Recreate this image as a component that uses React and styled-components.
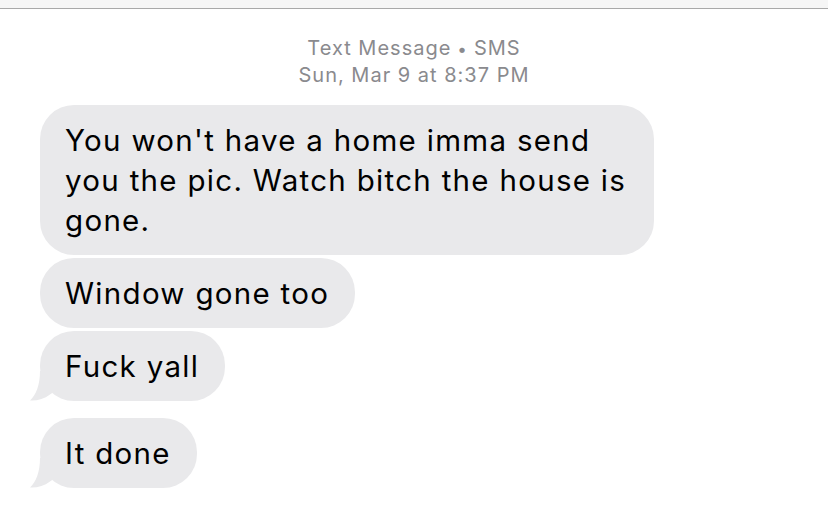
import React from "react";
import styled, { createGlobalStyle } from "styled-components";

const GlobalStyle = createGlobalStyle`
  html, body {
    margin: 0;
    padding: 0;
    background: #ffffff;
  }
  body {
    font-family: Inter, "Liberation Sans", Arial, sans-serif;
    -webkit-font-smoothing: antialiased;
  }
`;

const Page = styled.div`
  width: 828px;
  height: 517px;
  overflow: hidden;
  background: #fff;
`;

const TopBar = styled.div`
  height: 8px;
  background: #f6f6f6;
  border-bottom: 1px solid #a9a9a9;
`;

const Header = styled.div`
  display: flex;
  flex-direction: column;
  align-items: center;
  padding-top: 26px;
  color: #8a8a8e;
  font-size: 20px;
  line-height: 26px;
  letter-spacing: 1px;
`;

const Dot = styled.span`
  margin: 0 6px;
  font-size: 17px;
`;

const Thread = styled.div`
  display: flex;
  flex-direction: column;
  align-items: flex-start;
  padding: 17px 0 0 40px;
`;

const Bubble = styled.div`
  position: relative;
  max-width: 614px;
  box-sizing: border-box;
  padding: 15px 26px 15px 25px;
  background: #e9e9eb;
  color: #000;
  border-radius: 34px;
  font-size: 29.5px;
  line-height: 40px;
  letter-spacing: 1.3px;
  margin-top: ${(p) => (p.$gap === undefined ? 3 : p.$gap)}px;
`;

const Tail = styled.svg`
  position: absolute;
  left: -10px;
  bottom: 0;
  width: 26px;
  height: 30px;
`;

function Message({ children, tail, gap }) {
  return (
    <Bubble $gap={gap}>
      {children}
      {tail && (
        <Tail viewBox="0 0 26 30">
          <path
            d="M10 0 C10 14 6 24 0 29.5 C7 30 14 28 20 23.5 Q24 21 26 19 L26 0 Z"
            fill="#e9e9eb"
          />
        </Tail>
      )}
    </Bubble>
  );
}

export default function App() {
  return (
    <Page>
      <GlobalStyle />
      <TopBar />
      <Header>
        <div>
          Text Message<Dot>•</Dot>SMS
        </div>
        <div>Sun, Mar 9 at 8:37 PM</div>
      </Header>
      <Thread>
        <Message gap={0}>
          You won't have a home imma send you the pic. Watch bitch the house is
          gone.
        </Message>
        <Message>Window gone too</Message>
        <Message tail>Fuck yall</Message>
        <Message tail gap={17}>
          It done
        </Message>
      </Thread>
    </Page>
  );
}
